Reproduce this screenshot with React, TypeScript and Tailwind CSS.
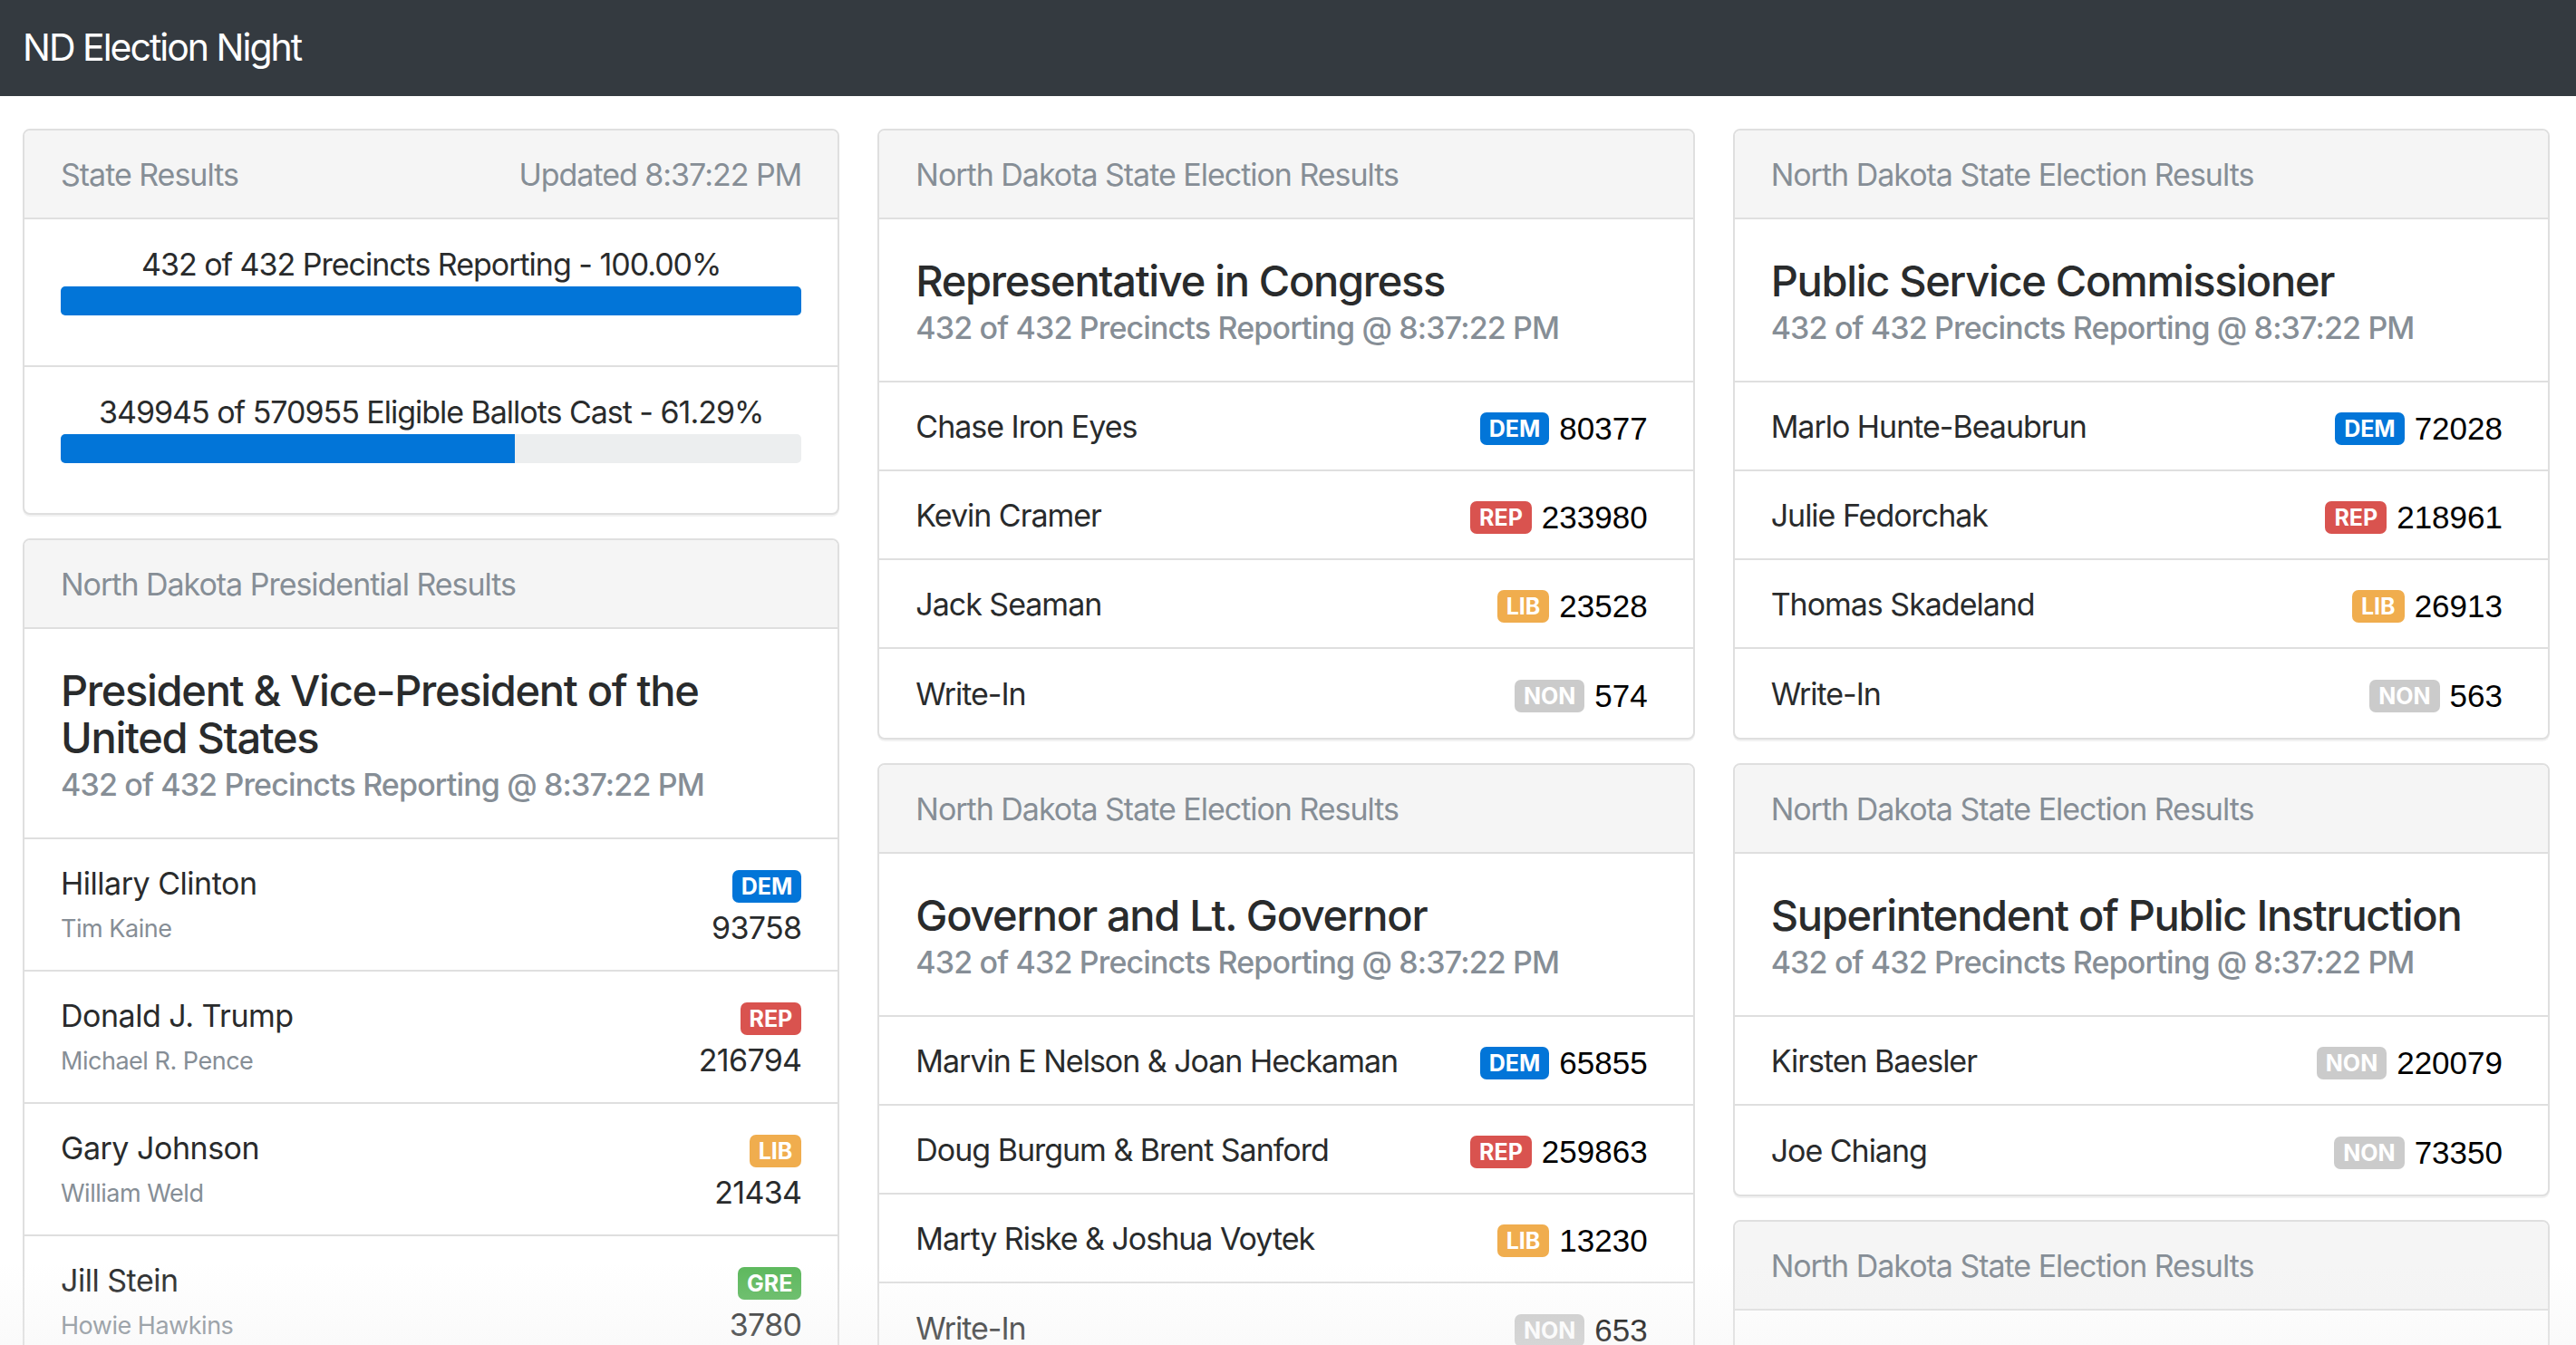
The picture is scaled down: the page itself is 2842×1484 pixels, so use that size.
import React from 'react';

type Party = 'DEM' | 'REP' | 'LIB' | 'GRE' | 'NON';

const partyColors: Record<Party, string> = {
  DEM: 'bg-[#0275d8]',
  REP: 'bg-[#d9534f]',
  LIB: 'bg-[#f0ad4e]',
  GRE: 'bg-[#5cb85c]',
  NON: 'bg-[#cbcbcb]',
};

type Candidate = { name: string; party: Party; votes: number; running?: string };
type Race = { title: string; candidates: Candidate[] };

const REPORTING = '432 of 432 Precincts Reporting @ 8:37:22 PM';

const president: Candidate[] = [
  { name: 'Hillary Clinton', running: 'Tim Kaine', party: 'DEM', votes: 93758 },
  { name: 'Donald J. Trump', running: 'Michael R. Pence', party: 'REP', votes: 216794 },
  { name: 'Gary Johnson', running: 'William Weld', party: 'LIB', votes: 21434 },
  { name: 'Jill Stein', running: 'Howie Hawkins', party: 'GRE', votes: 3780 },
];

const middleRaces: Race[] = [
  {
    title: 'Representative in Congress',
    candidates: [
      { name: 'Chase Iron Eyes', party: 'DEM', votes: 80377 },
      { name: 'Kevin Cramer', party: 'REP', votes: 233980 },
      { name: 'Jack Seaman', party: 'LIB', votes: 23528 },
      { name: 'Write-In', party: 'NON', votes: 574 },
    ],
  },
  {
    title: 'Governor and Lt. Governor',
    candidates: [
      { name: 'Marvin E Nelson & Joan Heckaman', party: 'DEM', votes: 65855 },
      { name: 'Doug Burgum & Brent Sanford', party: 'REP', votes: 259863 },
      { name: 'Marty Riske & Joshua Voytek', party: 'LIB', votes: 13230 },
      { name: 'Write-In', party: 'NON', votes: 653 },
    ],
  },
];

const rightRaces: Race[] = [
  {
    title: 'Public Service Commissioner',
    candidates: [
      { name: 'Marlo Hunte-Beaubrun', party: 'DEM', votes: 72028 },
      { name: 'Julie Fedorchak', party: 'REP', votes: 218961 },
      { name: 'Thomas Skadeland', party: 'LIB', votes: 26913 },
      { name: 'Write-In', party: 'NON', votes: 563 },
    ],
  },
  {
    title: 'Superintendent of Public Instruction',
    candidates: [
      { name: 'Kirsten Baesler', party: 'NON', votes: 220079 },
      { name: 'Joe Chiang', party: 'NON', votes: 73350 },
    ],
  },
];

const Badge = ({ party }: { party: Party }) => (
  <span
    className={`${partyColors[party]} inline-flex h-[36px] items-center rounded-[7px] px-[10px] text-[25px] font-bold leading-none tracking-normal text-white`}
  >
    {party}
  </span>
);

const Card = ({ header, right, children }: { header: string; right?: string; children: React.ReactNode }) => (
  <div className="overflow-hidden rounded-[8px] border-2 border-[#dfdfdf] bg-white shadow-[0_2px_0_rgba(0,0,0,0.05)]">
    <div className="flex h-[98px] items-center justify-between border-b-2 border-[#dfdfdf] bg-[#f5f5f5] px-[40px] text-[34px] tracking-[-0.03em] text-[#868e96]">
      <span>{header}</span>
      {right && <span>{right}</span>}
    </div>
    {children}
  </div>
);

const RaceTitle = ({ title }: { title: string }) => (
  <div className="px-[40px] pt-[42px] pb-[38px]">
    <h4 className="text-[47px] font-medium leading-[52px] tracking-[-0.028em] text-[#292b2c]">{title}</h4>
    <h6 className="mt-[6px] text-[34px] font-medium leading-[40px] tracking-[-0.025em] text-[#868e96]">
      {REPORTING}
    </h6>
  </div>
);

const Progress = ({ label, pct }: { label: string; pct: number }) => (
  <div className="px-[40px] pt-[29px] pb-[55px]">
    <div className="text-center text-[34px] leading-[42px] tracking-[-0.03em] text-[#292b2c]">{label}</div>
    <div className="mt-[3px] h-[32px] overflow-hidden rounded-[5px] bg-[#eceeef]">
      <div className="h-full bg-[#0275d8]" style={{ width: `${pct}%` }} />
    </div>
  </div>
);

const RaceCard = ({ race }: { race: Race }) => (
  <Card header="North Dakota State Election Results">
    <div className="divide-y-2 divide-[#dfdfdf]">
      <RaceTitle title={race.title} />
      {race.candidates.map((c) => (
        <div key={c.name} className="flex h-[98px] items-center justify-between px-[40px]">
          <span className="text-[34px] tracking-[-0.03em] text-[#292b2c]">{c.name}</span>
          <span className="mr-[10px] mt-[6px] flex items-center gap-[11px]">
            <Badge party={c.party} />
            <span className="font-['Liberation_Sans',Arial,sans-serif] text-[35px] text-black">{c.votes}</span>
          </span>
        </div>
      ))}
    </div>
  </Card>
);

export default function App() {
  return (
    <div className="relative h-screen overflow-hidden bg-white font-['Inter','Noto_Sans',sans-serif]">
      {/* NAVBAR */}
      <nav className="flex h-[106px] items-center bg-[#343a40] px-[25px]">
        <span className="text-[41px] tracking-[-2px] text-white">ND Election Night</span>
      </nav>

      <main className="grid grid-cols-3 gap-x-[42px] pt-[36px] pr-[29px] pl-[25px]">
        {/* LEFT COLUMN */}
        <div className="flex flex-col gap-[26px]">
          <Card header="State Results" right="Updated 8:37:22 PM">
            <div className="divide-y-2 divide-[#dfdfdf]">
              <Progress label="432 of 432 Precincts Reporting - 100.00%" pct={100} />
              <Progress label="349945 of 570955 Eligible Ballots Cast - 61.29%" pct={61.29} />
            </div>
          </Card>

          <Card header="North Dakota Presidential Results">
            <div className="divide-y-2 divide-[#dfdfdf]">
              <RaceTitle title="President & Vice-President of the United States" />
              {president.map((c) => (
                <div key={c.name} className="flex h-[146px] justify-between px-[40px]">
                  <div className="pt-[27px] tracking-[-0.03em]">
                    <div className="text-[34px] leading-[44px] text-[#292b2c]">{c.name}</div>
                    <div className="mt-[8px] text-[27px] leading-[40px] text-[#868e96]">{c.running}</div>
                  </div>
                  <div className="flex flex-col items-end pt-[34px]">
                    <Badge party={c.party} />
                    <span className="mt-[8px] text-[34px] leading-[40px] tracking-[-0.02em] text-[#292b2c]">
                      {c.votes}
                    </span>
                  </div>
                </div>
              ))}
            </div>
          </Card>
        </div>

        {/* MIDDLE COLUMN */}
        <div className="flex flex-col gap-[26px]">
          {middleRaces.map((r) => (
            <RaceCard key={r.title} race={r} />
          ))}
        </div>

        {/* RIGHT COLUMN */}
        <div className="flex flex-col gap-[26px]">
          {rightRaces.map((r) => (
            <RaceCard key={r.title} race={r} />
          ))}
          <Card header="North Dakota State Election Results">
            <div className="h-[180px]" />
          </Card>
        </div>
      </main>

      {/* bottom fade */}
      <div className="pointer-events-none absolute inset-x-0 bottom-0 h-[90px] bg-gradient-to-b from-transparent to-[rgba(238,238,238,0.3)]" />
    </div>
  );
}
